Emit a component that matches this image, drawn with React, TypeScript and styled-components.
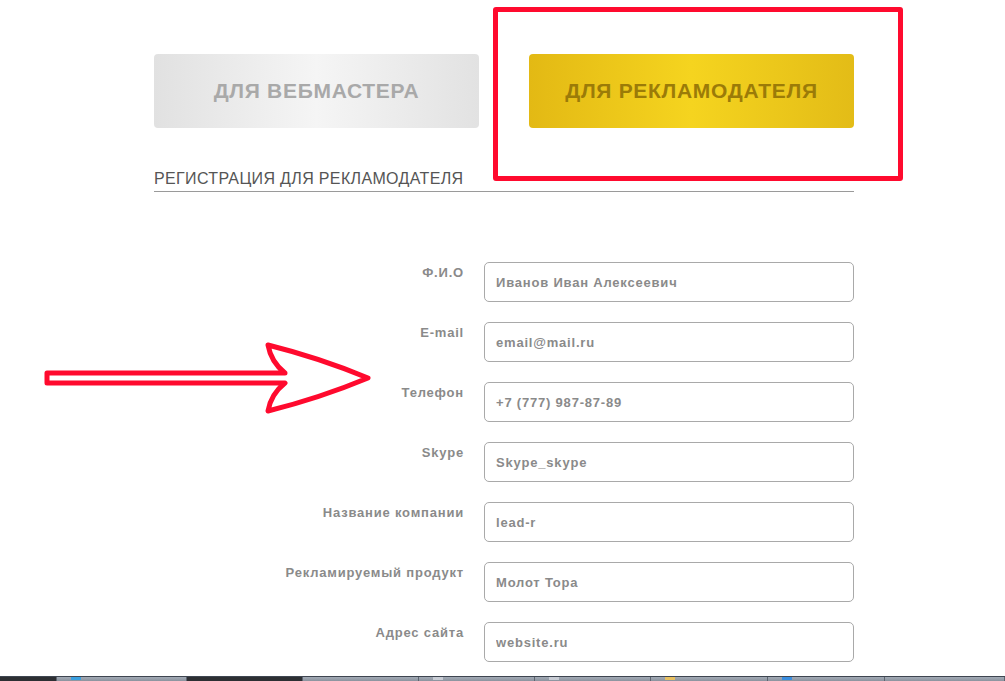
import React from "react";
import styled, { createGlobalStyle } from "styled-components";

const Global = createGlobalStyle`
  html, body { margin: 0; padding: 0; background: #fff; }
  body { font-family: "Liberation Sans", Arial, sans-serif; }
`;

const Screen = styled.div`
  position: relative;
  width: 1005px;
  height: 681px;
  display: flex;
  flex-direction: column;
  overflow: hidden;
  background: #fff;
`;

const Page = styled.main`
  flex: 1;
  overflow: hidden;
  padding: 54px 0 0 154px;
`;

const Column = styled.div`
  width: 700px;
  display: flex;
  flex-direction: column;
`;

const Tabs = styled.div`
  display: flex;
  gap: 50px;
`;

const TabButton = styled.button<{ $active?: boolean }>`
  width: 325px;
  height: 74px;
  border: 0;
  border-radius: 4px;
  font-family: "Liberation Sans", Arial, sans-serif;
  font-weight: bold;
  font-size: 21px;
  letter-spacing: 0.7px;
  cursor: pointer;
  color: ${(p) => (p.$active ? "#9b7b08" : "#a9a9a9")};
  background: ${(p) =>
    p.$active
      ? "linear-gradient(90deg, #e3b914 0%, #f5d41f 50%, #e3bc17 100%)"
      : "linear-gradient(90deg, #e1e1e1 0%, #f5f5f5 50%, #e2e2e2 100%)"};
`;

const Heading = styled.h2`
  margin: 42px 0 0;
  padding-bottom: 3px;
  font-size: 16px;
  line-height: 18px;
  font-weight: normal;
  letter-spacing: 0.35px;
  color: #555;
  border-bottom: 1px solid #9a9a9a;
  text-transform: uppercase;
`;

const Form = styled.form`
  margin-top: 70px;
  display: flex;
  flex-direction: column;
  gap: 20px;
`;

const Row = styled.div`
  display: grid;
  grid-template-columns: 310px 370px;
  column-gap: 20px;
  align-items: start;
`;

const Label = styled.label`
  text-align: right;
  padding-top: 3px;
  font-size: 13px;
  line-height: 16px;
  font-weight: bold;
  letter-spacing: 0.8px;
  color: #8a8a8a;
`;

const Field = styled.input`
  box-sizing: border-box;
  width: 370px;
  height: 40px;
  margin: 0;
  padding: 0 11px;
  border: 1px solid #a9a9a9;
  border-radius: 5px;
  font-family: "Liberation Sans", Arial, sans-serif;
  font-size: 13px;
  font-weight: bold;
  letter-spacing: 0.8px;
  color: #8a8a8a;
  background: #fff;
  outline: none;
`;

const Taskbar = styled.div`
  height: 4px;
  display: flex;
  border-top: 1px solid #3e4550;
  background: linear-gradient(180deg, #a2aab5, #8b939e);
`;

const TaskItem = styled.div<{ $w: number; $dark?: boolean; $icon?: string }>`
  position: relative;
  width: ${(p) => p.$w}px;
  flex: none;
  box-sizing: border-box;
  border-right: 1px solid #5d6470;
  background: ${(p) => (p.$dark ? "#2d2f33" : "transparent")};
  &::after {
    content: "";
    display: ${(p) => (p.$icon ? "block" : "none")};
    position: absolute;
    left: 14px;
    top: 0;
    width: 10px;
    height: 3px;
    background: ${(p) => p.$icon || "transparent"};
  }
`;

const Frame = styled.div`
  position: absolute;
  left: 493px;
  top: 7px;
  width: 410px;
  height: 174px;
  box-sizing: border-box;
  border: 5px solid #ff0a2e;
  border-radius: 3px;
  pointer-events: none;
`;

const ArrowMark = styled.svg`
  position: absolute;
  left: 30px;
  top: 330px;
  width: 360px;
  height: 100px;
  pointer-events: none;
`;

const fields = [
  ["Ф.И.О", "Иванов Иван Алексеевич"],
  ["E-mail", "email@mail.ru"],
  ["Телефон", "+7 (777) 987-87-89"],
  ["Skype", "Skype_skype"],
  ["Название компании", "lead-r"],
  ["Рекламируемый продукт", "Молот Тора"],
  ["Адрес сайта", "website.ru"],
];

export default function App() {
  return (
    <Screen>
      <Global />
      <Page>
        <Column>
          <Tabs>
            <TabButton type="button">ДЛЯ ВЕБМАСТЕРА</TabButton>
            <TabButton type="button" $active>
              ДЛЯ РЕКЛАМОДАТЕЛЯ
            </TabButton>
          </Tabs>
          <Heading>Регистрация для рекламодателя</Heading>
          <Form onSubmit={(e) => e.preventDefault()}>
            {fields.map(([label, value]) => (
              <Row key={label}>
                <Label>{label}</Label>
                <Field defaultValue={value} readOnly />
              </Row>
            ))}
          </Form>
        </Column>
      </Page>
      <Taskbar>
        <TaskItem $w={57} $dark />
        <TaskItem $w={130} $icon="#3aa0e0" />
        <TaskItem $w={116} $dark />
        <TaskItem $w={116} />
        <TaskItem $w={116} $icon="#c8ccd4" />
        <TaskItem $w={116} $icon="#c8ccd4" />
        <TaskItem $w={117} $icon="#e8c060" />
        <TaskItem $w={117} $icon="#3a8ee0" />
        <TaskItem $w={120} />
      </Taskbar>
      <Frame />
      <ArrowMark viewBox="0 0 360 100">
        <path
          d="M17 43 L255 43 Q241 32 238 15 Q290 28 338 48 Q290 68 238 81 Q241 64 255 53 L17 53 Z"
          fill="#fff"
          stroke="#ff0a2e"
          strokeWidth={5}
          strokeLinejoin="round"
        />
      </ArrowMark>
    </Screen>
  );
}
